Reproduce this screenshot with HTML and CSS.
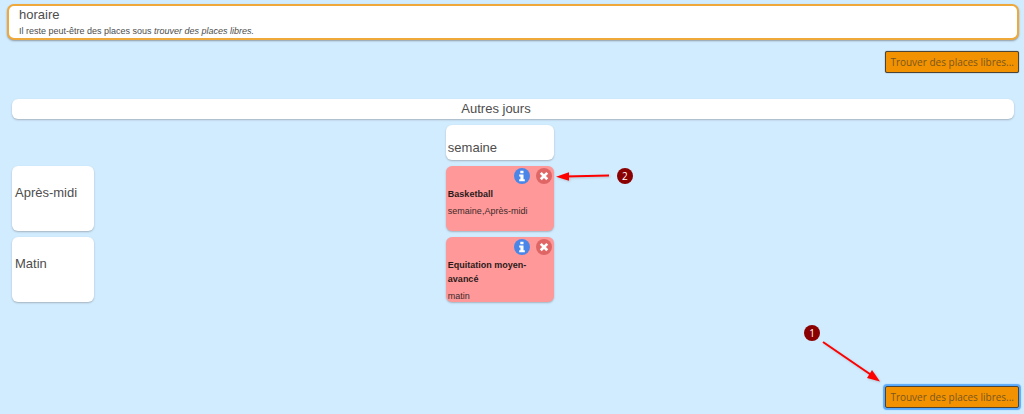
FILE: index.html
```html
<!DOCTYPE html>
<html lang="fr">
<head>
<meta charset="utf-8">
<meta name="viewport" content="width=device-width, initial-scale=1">
<title>horaire</title>
<link rel="stylesheet" href="styles.css">
</head>
<body>
<svg class="defs" aria-hidden="true">
  <symbol id="info" viewBox="0 0 12 12">
    <path d="M4.300 .8h3.200v2.500H4.300zM3.200 4.500h4.300v4.700h1.300v2H3.200v-2h1.200V6.500H3.200z"/>
  </symbol>
  <symbol id="cross" viewBox="0 0 12 12">
    <path d="M3.700 1.900 6 4.200l2.300-2.300 1.900 1.900L7.900 6l2.300 2.300-1.900 1.900L6 7.900l-2.300 2.300-1.900-1.900L4.100 6 1.800 3.800z"/>
  </symbol>
</svg>
<main class="page">
  <header class="banner">
    <h1 class="title">horaire</h1>
    <p class="hint">Il reste peut-être des places sous <em>trouver des places libres.</em></p>
  </header>
  <div class="actions">
    <button class="find" type="button">Trouver des places libres...</button>
  </div>
  <section class="schedule">
    <h2 class="days">Autres jours</h2>
    <div class="grid">
      <div class="card week">semaine</div>
      <div class="card slot">Après-midi</div>
      <article class="card activity">
        <div class="tools">
          <button class="tool info" type="button" aria-label="Informations"><svg><use href="#info"/></svg></button>
          <button class="tool remove" type="button" aria-label="Supprimer"><svg><use href="#cross"/></svg></button>
        </div>
        <h3 class="name">Basketball</h3>
        <p class="when">semaine,Après-midi</p>
        <div class="note note-remove">
          <svg class="arrow-left" viewBox="0 0 56 14"><path class="shaft" d="M10 7.6 54 6.6"/><path class="head" d="M1 7.8 14 3.2v8.6z"/></svg>
          <span class="step">2</span>
        </div>
      </article>
      <div class="card slot">Matin</div>
      <article class="card activity">
        <div class="tools">
          <button class="tool info" type="button" aria-label="Informations"><svg><use href="#info"/></svg></button>
          <button class="tool remove" type="button" aria-label="Supprimer"><svg><use href="#cross"/></svg></button>
        </div>
        <h3 class="name">Equitation moyen-avancé</h3>
        <p class="when">matin</p>
      </article>
    </div>
  </section>
  <div class="actions bottom">
    <div class="anchor">
      <button class="find focused" type="button">Trouver des places libres...</button>
      <div class="note note-find">
        <span class="step">1</span>
        <svg class="arrow-down" viewBox="0 0 60 42"><path class="shaft" d="M2 1 51 34.500"/><path class="head" d="M59 40.500 46 37l5-8z"/></svg>
      </div>
    </div>
  </div>
</main>
</body>
</html>
```
FILE: styles.css
```css
* { box-sizing: border-box; }
body {
  margin: 0;
  background: #d1ecff;
  color: #4d4d4d;
  font-family: "Liberation Sans", Arial, sans-serif;
  font-size: 13px;
}
h1, h2, h3, p { margin: 0; font-weight: normal; }
.defs { display: none; }
.page { padding: 4px 5px 6px 7px; }
.banner {
  padding: 0 10px;
  background: #fff;
  border: 2px solid #efa93a;
  border-radius: 7px;
  box-shadow: 0 1px 2px #8d9aa3;
}
.title { font-size: 13px; line-height: 18px; }
.hint { font-size: 9px; line-height: 14px; }
.actions { display: flex; justify-content: flex-end; margin-top: 11px; }
.bottom { margin-top: 84px; }
.find {
  display: block;
  height: 22px;
  padding: 0 4px;
  background: #f39200;
  border: 1px solid #4d4438;
  border-radius: 2px;
  box-shadow: 0 0 1px #4d4438;
  color: #79561f;
  font-family: "Open Sans", "Noto Sans", sans-serif;
  font-size: 10px;
  line-height: 20px;
}
.focused { box-shadow: 0 0 1px 2px #58a9fa; }
.schedule { margin: 26px 5px 0; }
.days, .card {
  background: #fff;
  border-radius: 6px;
  box-shadow: 0 1px 2px #a3b2bd;
}
.days {
  padding-right: 34px;
  font-size: 13px;
  line-height: 20px;
  text-align: center;
}
.grid {
  display: grid;
  grid-template-columns: calc(43% + 3px) 108px;
  grid-template-rows: 35px;
  grid-auto-rows: 65px;
  row-gap: 6px;
  margin-top: 6px;
}
.card { padding: 0 2px; }
.week { grid-column: 2; padding-top: 15px; line-height: 16px; }
.slot { width: 82px; padding: 19px 3px 0; line-height: 16px; }
.activity {
  position: relative;
  background: #ff9999;
  color: #3d2929;
  font-size: 9px;
  line-height: 14px;
}
.tools { display: flex; justify-content: flex-end; gap: 6px; padding: 2px 0 3px; }
.tool {
  display: grid;
  place-items: center;
  width: 16px;
  height: 16px;
  padding: 0;
  border: 0;
  border-radius: 50%;
  color: #fff;
}
.tool svg { width: 12px; height: 12px; fill: currentColor; }
.info { background: #4a86e8; }
.remove { background: #e06666; }
.name { color: #2b1a1a; font-size: 9px; font-weight: bold; line-height: 14px; }
.when { margin-top: 3px; line-height: 14px; }
.anchor { position: relative; }
.note { position: absolute; pointer-events: none; }
.note-remove { display: flex; align-items: center; gap: 6px; left: 109px; top: 2px; }
.note-find { right: 138px; bottom: 25px; }
.step {
  display: block;
  width: 16px;
  height: 16px;
  border-radius: 50%;
  background: #8b0000;
  color: #fff;
  font-family: "Open Sans", "Noto Sans", sans-serif;
  font-size: 10px;
  line-height: 16px;
  text-align: center;
}
.arrow-left { width: 56px; height: 14px; filter: drop-shadow(1px 1px 1px #8886); }
.arrow-down { display: block; width: 60px; height: 42px; margin-left: 17px; filter: drop-shadow(1px 1px 1px #8886); }
.shaft { fill: none; stroke: #f00; stroke-width: 2; }
.head { fill: #f00; }
```
